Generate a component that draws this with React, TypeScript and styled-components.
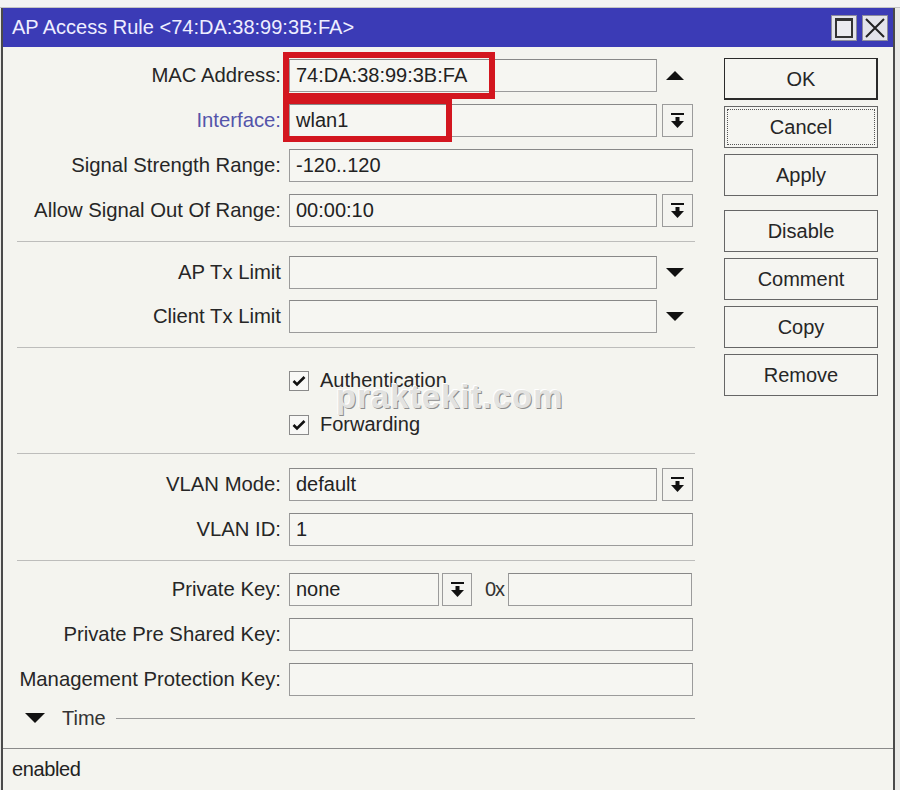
import styled, { createGlobalStyle } from "styled-components";

const GlobalStyle = createGlobalStyle`
  *, *::before, *::after { box-sizing:border-box; }
  html, body { margin:0; padding:0; }
  body {
    font-family:"Liberation Sans", Arial, sans-serif;
    background:#e9e9e6;
    color:#222;
  }
`

const Page = styled.div`
  position:relative;
  width:900px;
  height:790px;
  overflow:hidden;
  background:#e9e9e6;
`

const BackStrip = styled.div`
  height:8px;
  background:#f3f3f3;
  border-bottom:1px solid #c4c4c4;
`

const Window = styled.div`
  margin-left:1px;
  width:894px;
  height:782px;
  display:flex;
  flex-direction:column;
  background:#f4f4ef;
  border-left:2px solid #4a4a4a;
  border-right:2px solid #4a4a4a;
`

const TitleBar = styled.div`
  height:39px;
  flex:none;
  display:flex;
  align-items:center;
  padding:0 5px 0 9px;
  background:#3b3bb6;
  color:#eeeeff;
  font-size:20px;
`

const TitleText = styled.span`
  flex:1;
  white-space:nowrap;
`

const TitleControls = styled.div`
  display:flex;
  gap:5px;
`

const TitleButton = styled.div`
  width:26px;
  height:26px;
  display:flex;
  align-items:center;
  justify-content:center;
  background:#e4e4ea;
  border:1px solid #8c8c9c;
`

const MaxBox = styled.div`
  width:18px;
  height:20px;
  border:2px solid #333;
  border-top-width:3px;
  background:#ececf0;
`

const Main = styled.div`
  flex:1;
  display:flex;
`

const FormCol = styled.div`
  width:697px;
  flex:none;
  display:flex;
  flex-direction:column;
`

const Section = styled.div<{ $pt: number; $pb: number; $gap: number }>`
  display:flex;
  flex-direction:column;
  gap:${p => p.$gap}px;
  padding:${p => p.$pt}px 0 ${p => p.$pb}px;
`

const Divider = styled.div`
  height:1px;
  margin:0 5px 0 14px;
  background:#bdbdbb;
`

const Row = styled.div`
  height:33px;
  display:flex;
  align-items:center;
`

const Label = styled.div<{ $accent?: boolean }>`
  width:278px;
  flex:none;
  margin-right:8px;
  text-align:right;
  font-size:20.3px;
  white-space:nowrap;
  color:${p => (p.$accent ? "#5454aa" : "#262626")};
`

const Input = styled.div<{ $w: number }>`
  width:${p => p.$w}px;
  height:33px;
  flex:none;
  display:flex;
  align-items:center;
  padding:0 6px;
  background:#f6f6f2;
  border:1px solid #9b9b9b;
  border-top-color:#888;
  font-size:20px;
  color:#222;
  white-space:nowrap;
`

const DropButton = styled.div<{ $ml?: number; $w?: number }>`
  width:${p => p.$w ?? 31}px;
  height:33px;
  flex:none;
  margin-left:${p => p.$ml ?? 5}px;
  display:flex;
  align-items:center;
  justify-content:center;
  background:#f4f4f0;
  border:1px solid #9b9b9b;
`

const ArrowSlot = styled.div`
  width:36px;
  height:33px;
  flex:none;
  display:flex;
  align-items:center;
  justify-content:center;
`

const Hex = styled.span`
  width:23px;
  margin-left:13px;
  font-size:20px;
  letter-spacing:-1px;
  color:#333;
`

const CheckBox = styled.div`
  width:20px;
  height:20px;
  flex:none;
  display:flex;
  align-items:center;
  justify-content:center;
  background:#f8f8f6;
  border:1px solid #8a8a8a;
`

const CheckText = styled.span`
  margin-left:11px;
  font-size:20px;
  color:#262626;
`

const TimeRow = styled.div`
  height:20px;
  margin-top:12px;
  display:flex;
  align-items:center;
`

const Caret = styled.span`
  display:flex;
  margin-left:22px;
`

const TimeText = styled.span`
  margin-left:17px;
  font-size:20px;
  color:#333;
`

const TimeLine = styled.div`
  flex:1;
  height:1px;
  margin:0 5px 0 10px;
  background:#9a9a9a;
`

const ButtonCol = styled.div`
  margin-left:24px;
  padding-top:11px;
  display:flex;
  flex-direction:column;
  gap:6px;
`

const Button = styled.div<{ $default?: boolean; $focus?: boolean; $mt?: number }>`
  position:relative;
  width:154px;
  height:42px;
  margin-top:${p => p.$mt ?? 0}px;
  display:flex;
  align-items:center;
  justify-content:center;
  background:#f5f5f1;
  border:1px solid ${p => (p.$default ? "#2a2a2a" : "#666")};
  box-shadow:${p => (p.$default ? "inset -1px -1px 0 #2a2a2a" : "none")};
  font-size:20px;
  color:#262626;

  &::after {
    content:"";
    display:${p => (p.$focus ? "block" : "none")};
    position:absolute;
    inset:2px;
    border:1px dotted #555;
  }
`

const StatusBar = styled.div`
  height:42px;
  flex:none;
  display:flex;
  align-items:center;
  padding-left:9px;
  border-top:1px solid #8a8a8a;
  font-size:20px;
  letter-spacing:-0.4px;
  color:#222;
`

const Highlight = styled.div<{ $x: number; $y: number; $w: number; $h: number }>`
  position:absolute;
  left:${p => p.$x}px;
  top:${p => p.$y}px;
  width:${p => p.$w}px;
  height:${p => p.$h}px;
  border:6px solid #d3161f;
  pointer-events:none;
`

const Watermark = styled.div`
  position:absolute;
  left:336px;
  top:378px;
  font-size:33px;
  font-weight:bold;
  letter-spacing:1px;
  color:#e2e2e0;
  text-shadow:-1px -1px 0 #ffffff, 1px 1px 0 #8e8e8e;
  pointer-events:none;
`

const DropIcon = () => (
  <svg width="13" height="15" viewBox="0 0 13 15">
    <rect x="0" y="0" width="13" height="2" fill="#111" />
    <rect x="4.5" y="4" width="4" height="5" fill="#111" />
    <polygon points="0,8 13,8 6.5,15" fill="#111" />
  </svg>
)

const Triangle = ({ up }: { up?: boolean }) => (
  <svg width="18" height="9" viewBox="0 0 18 9">
    <polygon points={up ? "0,9 18,9 9,0" : "0,0 18,0 9,9"} fill="#111" />
  </svg>
)

const Check = () => (
  <svg width="14" height="12" viewBox="0 0 14 12">
    <polyline points="1.5,6 5,9.5 12.5,2" fill="none" stroke="#111" strokeWidth="2.6" />
  </svg>
)

const CloseX = () => (
  <svg width="22" height="22" viewBox="0 0 22 22">
    <path d="M2 2 L20 20 M20 2 L2 20" stroke="#222" strokeWidth="2" />
  </svg>
)

const App = () => {
  return (
    <Page>
      <GlobalStyle />
      <BackStrip />
      <Window>
        <TitleBar>
          <TitleText>AP Access Rule &lt;74:DA:38:99:3B:FA&gt;</TitleText>
          <TitleControls>
            <TitleButton>
              <MaxBox />
            </TitleButton>
            <TitleButton>
              <CloseX />
            </TitleButton>
          </TitleControls>
        </TitleBar>

        <Main>
          <FormCol>
            <Section $pt={12} $pb={14} $gap={12}>
              <Row>
                <Label>MAC Address:</Label>
                <Input $w={368}>74:DA:38:99:3B:FA</Input>
                <ArrowSlot><Triangle up /></ArrowSlot>
              </Row>
              <Row>
                <Label $accent>Interface:</Label>
                <Input $w={368}>wlan1</Input>
                <DropButton><DropIcon /></DropButton>
              </Row>
              <Row>
                <Label>Signal Strength Range:</Label>
                <Input $w={404}>-120..120</Input>
              </Row>
              <Row>
                <Label>Allow Signal Out Of Range:</Label>
                <Input $w={368}>00:00:10</Input>
                <DropButton><DropIcon /></DropButton>
              </Row>
            </Section>
            <Divider />

            <Section $pt={14} $pb={14} $gap={11}>
              <Row>
                <Label>AP Tx Limit</Label>
                <Input $w={368} />
                <ArrowSlot><Triangle /></ArrowSlot>
              </Row>
              <Row>
                <Label>Client Tx Limit</Label>
                <Input $w={368} />
                <ArrowSlot><Triangle /></ArrowSlot>
              </Row>
            </Section>
            <Divider />

            <Section $pt={16} $pb={12} $gap={11}>
              <Row>
                <Label />
                <CheckBox><Check /></CheckBox>
                <CheckText>Authentication</CheckText>
              </Row>
              <Row>
                <Label />
                <CheckBox><Check /></CheckBox>
                <CheckText>Forwarding</CheckText>
              </Row>
            </Section>
            <Divider />

            <Section $pt={14} $pb={14} $gap={12}>
              <Row>
                <Label>VLAN Mode:</Label>
                <Input $w={368}>default</Input>
                <DropButton><DropIcon /></DropButton>
              </Row>
              <Row>
                <Label>VLAN ID:</Label>
                <Input $w={404}>1</Input>
              </Row>
            </Section>
            <Divider />

            <Section $pt={12} $pb={0} $gap={12}>
              <Row>
                <Label>Private Key:</Label>
                <Input $w={150}>none</Input>
                <DropButton $ml={3} $w={30}><DropIcon /></DropButton>
                <Hex>0x</Hex>
                <Input $w={184} />
              </Row>
              <Row>
                <Label>Private Pre Shared Key:</Label>
                <Input $w={404} />
              </Row>
              <Row>
                <Label>Management Protection Key:</Label>
                <Input $w={404} />
              </Row>
            </Section>

            <TimeRow>
              <Caret>
                <svg width="20" height="10" viewBox="0 0 20 10">
                  <polygon points="0,0 20,0 10,10" fill="#111" />
                </svg>
              </Caret>
              <TimeText>Time</TimeText>
              <TimeLine />
            </TimeRow>
          </FormCol>

          <ButtonCol>
            <Button $default>OK</Button>
            <Button $focus>Cancel</Button>
            <Button>Apply</Button>
            <Button $mt={8}>Disable</Button>
            <Button>Comment</Button>
            <Button>Copy</Button>
            <Button>Remove</Button>
          </ButtonCol>
        </Main>

        <StatusBar>enabled</StatusBar>
      </Window>

      <Highlight $x={283} $y={52} $w={212} $h={47} />
      <Highlight $x={283} $y={98} $w={169} $h={44} />
      <Watermark>praktekit.com</Watermark>
    </Page>
  );
};

export default App;
